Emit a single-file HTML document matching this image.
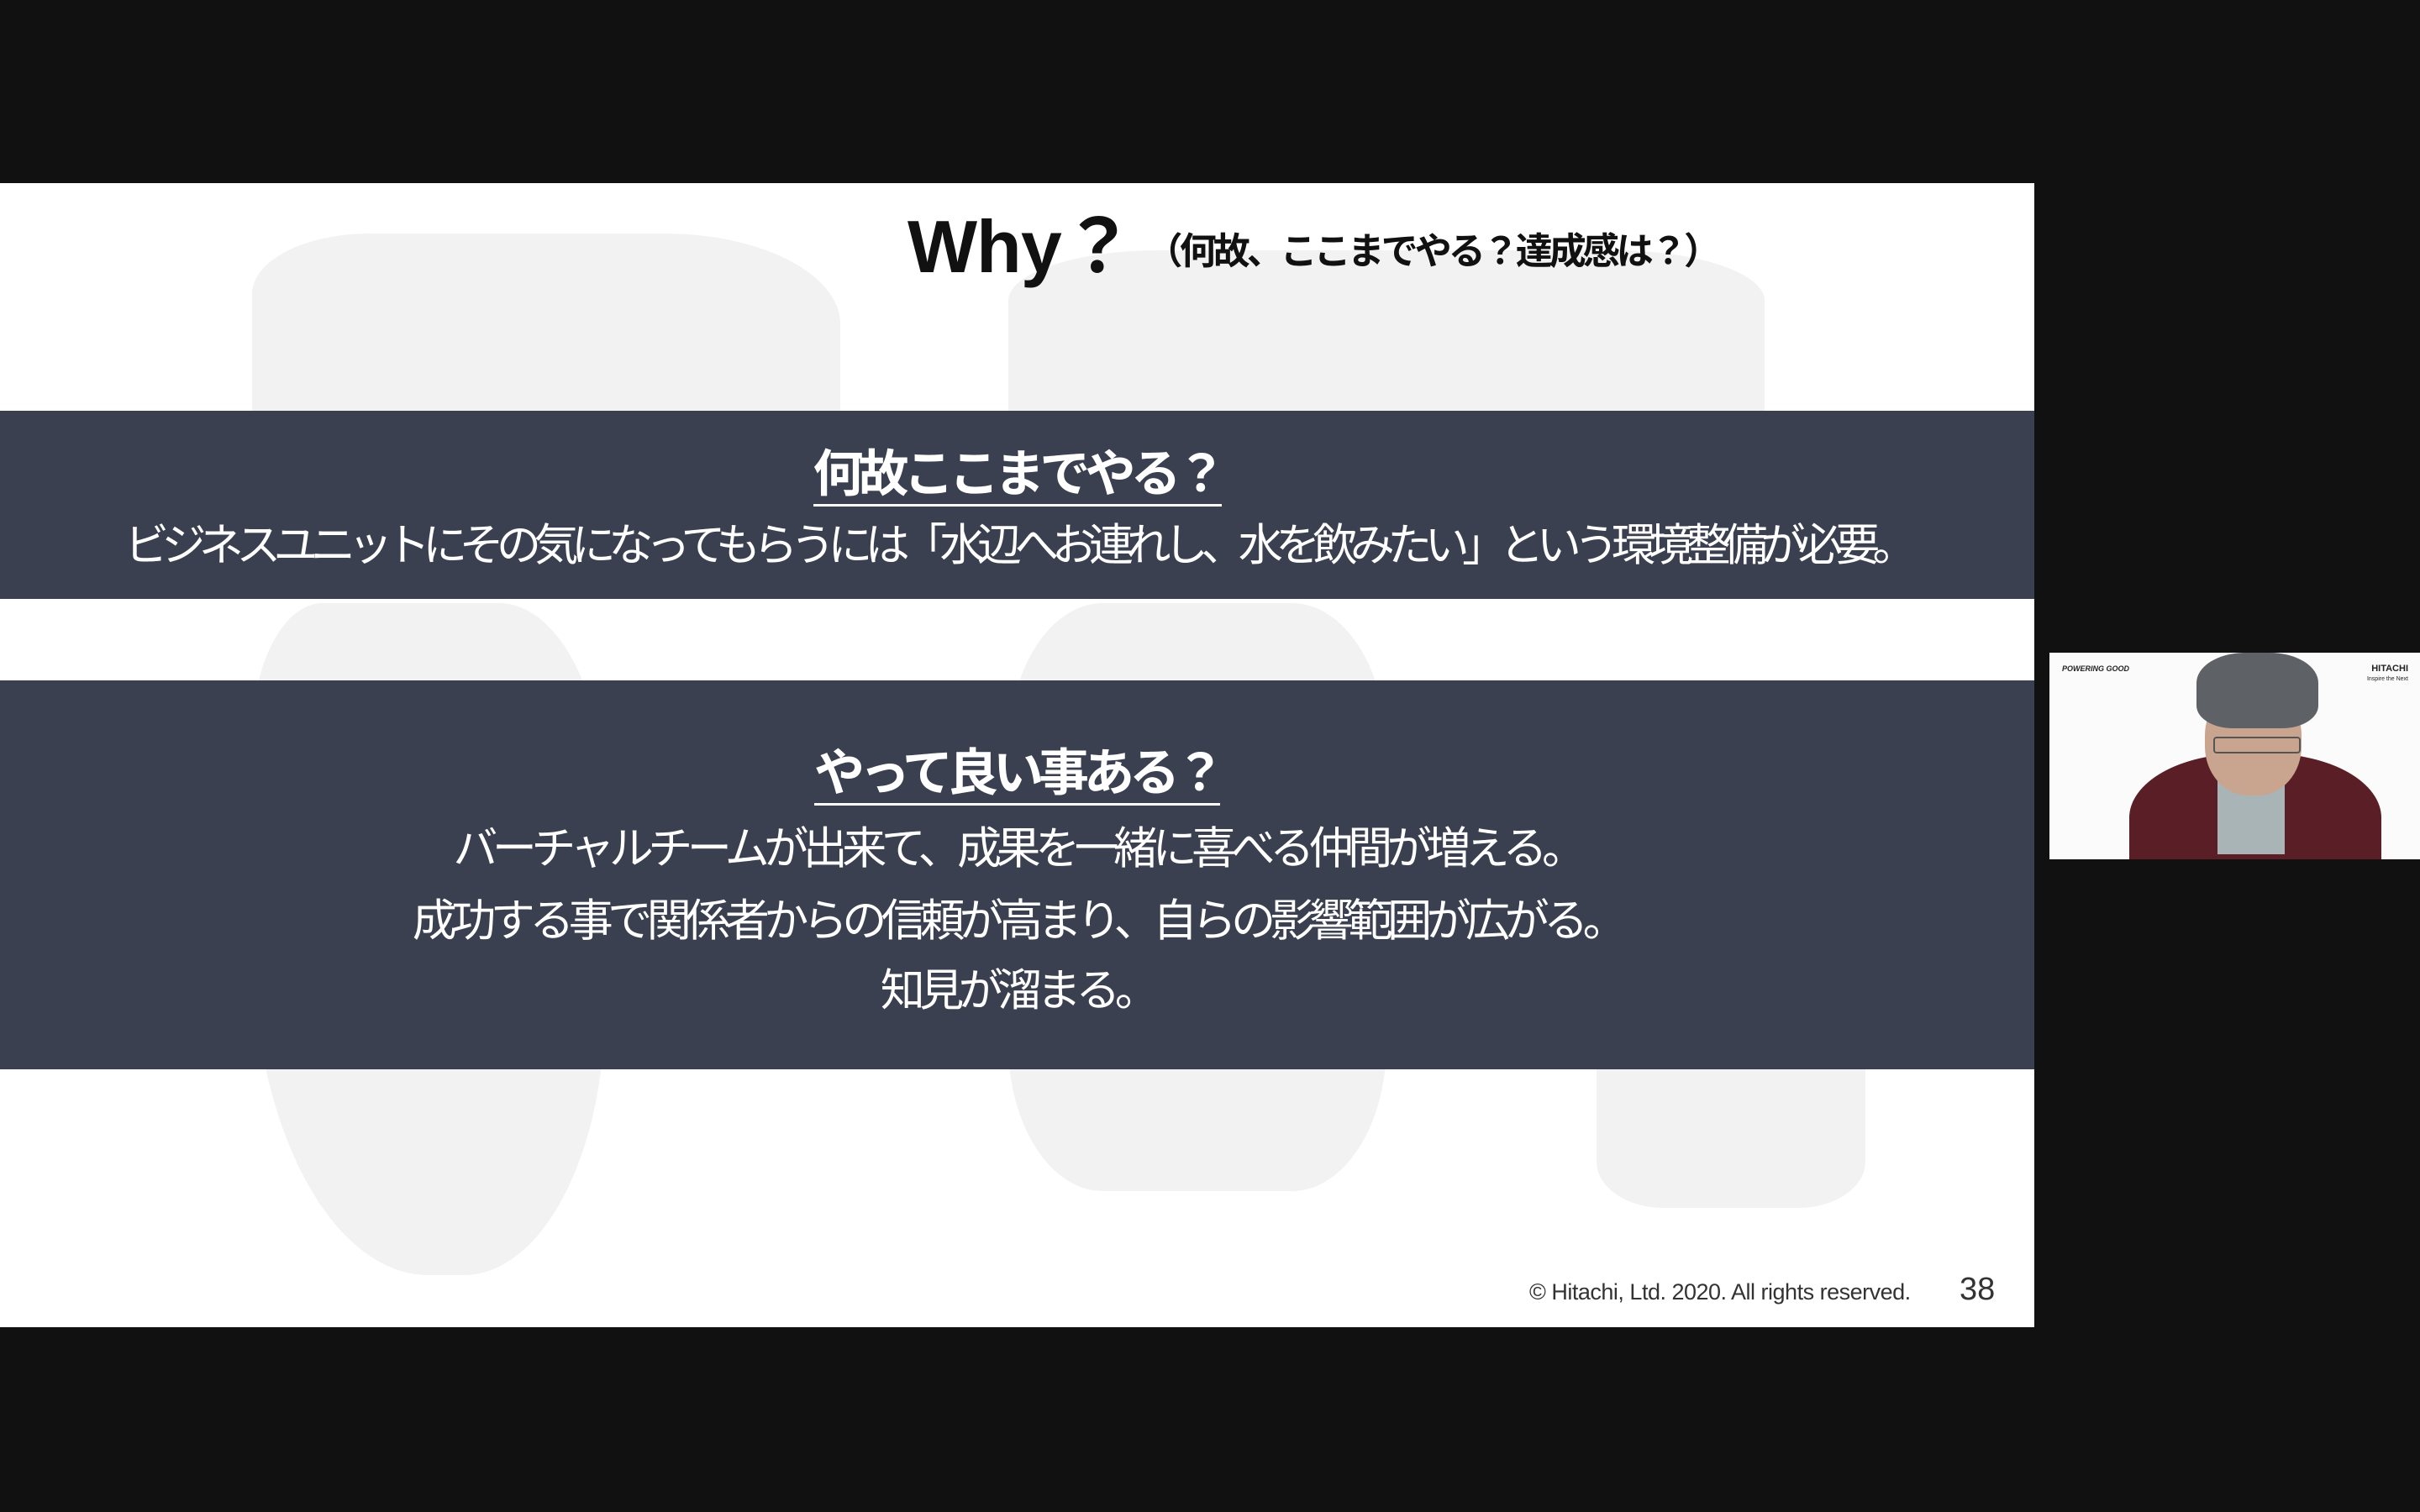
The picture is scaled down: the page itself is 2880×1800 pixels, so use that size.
<!DOCTYPE html>
<html><head><meta charset="utf-8"><style>
html,body{margin:0;padding:0;}
body{width:2880px;height:1800px;background:#111;position:relative;overflow:hidden;font-family:"Liberation Sans","Noto Sans CJK JP",sans-serif;}
.slide{position:absolute;left:0;top:218px;width:2421px;height:1362px;background:#fff;overflow:hidden;}
.blob{position:absolute;background:#f2f2f2;}
.band{position:absolute;left:0;width:2421px;background:#3a404f;color:#fff;}
.c{position:absolute;left:0;width:2421px;text-align:center;white-space:nowrap;}
.h{font-weight:bold;font-size:60px;letter-spacing:-6px;}
.h span{border-bottom:3px solid #fff;padding-bottom:2px;}
.t{font-size:53px;letter-spacing:-8.6px;}
.t2{font-size:53px;letter-spacing:-6.5px;}
</style></head><body>
<div class="slide">
  <div class="blob" style="left:300px;top:60px;width:700px;height:360px;border-radius:20% 30% 20% 30%;"></div>
  <div class="blob" style="left:1200px;top:80px;width:900px;height:300px;border-radius:20%;"></div>
  <div class="blob" style="left:300px;top:500px;width:420px;height:800px;border-radius:20% 30% 40% 50%;"></div>
  <div class="blob" style="left:1200px;top:500px;width:450px;height:700px;border-radius:25%;"></div>
  <div class="blob" style="left:1900px;top:1000px;width:320px;height:220px;border-radius:25%;"></div>
  <div class="c" style="top:5px;left:1080px;width:auto;text-align:left;color:#111;">
    <span style="font-size:88px;font-weight:bold;letter-spacing:-1px;">Why？</span><span style="font-size:44px;font-weight:bold;letter-spacing:-4px;margin-left:14px;vertical-align:10px;">（何故、ここまでやる？達成感は？）</span>
  </div>
  <div class="band" style="top:271px;height:224px;">
    <div class="c h" style="top:27px;"><span>何故ここまでやる？</span></div>
    <div class="c t" style="top:118px;">ビジネスユニットにその気になってもらうには「水辺へお連れし、水を飲みたい」という環境整備が必要。</div>
  </div>
  <div class="band" style="top:592px;height:463px;">
    <div class="c h" style="top:62px;"><span>やって良い事ある？</span></div>
    <div class="c t2" style="top:158px;">バーチャルチームが出来て、成果を一緒に喜べる仲間が増える。</div>
    <div class="c t2" style="top:244px;">成功する事で関係者からの信頼が高まり、自らの影響範囲が広がる。</div>
    <div class="c t2" style="top:327px;">知見が溜まる。</div>
  </div>
  <div style="position:absolute;left:1820px;top:1305px;font-size:27px;color:#333;letter-spacing:-0.5px;">© Hitachi, Ltd. 2020. All rights reserved.</div>
  <div style="position:absolute;left:2332px;top:1296px;font-size:38px;color:#333;">38</div>
</div>
<div style="position:absolute;left:2439px;top:777px;width:441px;height:246px;background:#fbfbfb;overflow:hidden;">
  <div style="position:absolute;left:15px;top:14px;font-size:9px;font-style:italic;font-weight:bold;color:#222;">POWERING GOOD</div>
  <div style="position:absolute;right:14px;top:14px;font-size:11px;font-weight:bold;color:#222;text-align:right;line-height:11px;">HITACHI<br><span style="font-size:7px;font-weight:normal;">Inspire the Next</span></div>
  <div style="position:absolute;left:95px;top:120px;width:300px;height:170px;background:#5a1e26;border-radius:45% 45% 0 0;"></div>
  <div style="position:absolute;left:200px;top:120px;width:80px;height:120px;background:#a9b4b6;"></div>
  <div style="position:absolute;left:185px;top:40px;width:115px;height:130px;background:#c9a48e;border-radius:45%;"></div>
  <div style="position:absolute;left:175px;top:0px;width:145px;height:90px;background:#5e6166;border-radius:40% 40% 30% 30%;"></div>
  <div style="position:absolute;left:195px;top:100px;width:100px;height:16px;border:2px solid #555;border-radius:4px;"></div>
</div>
</body></html>
